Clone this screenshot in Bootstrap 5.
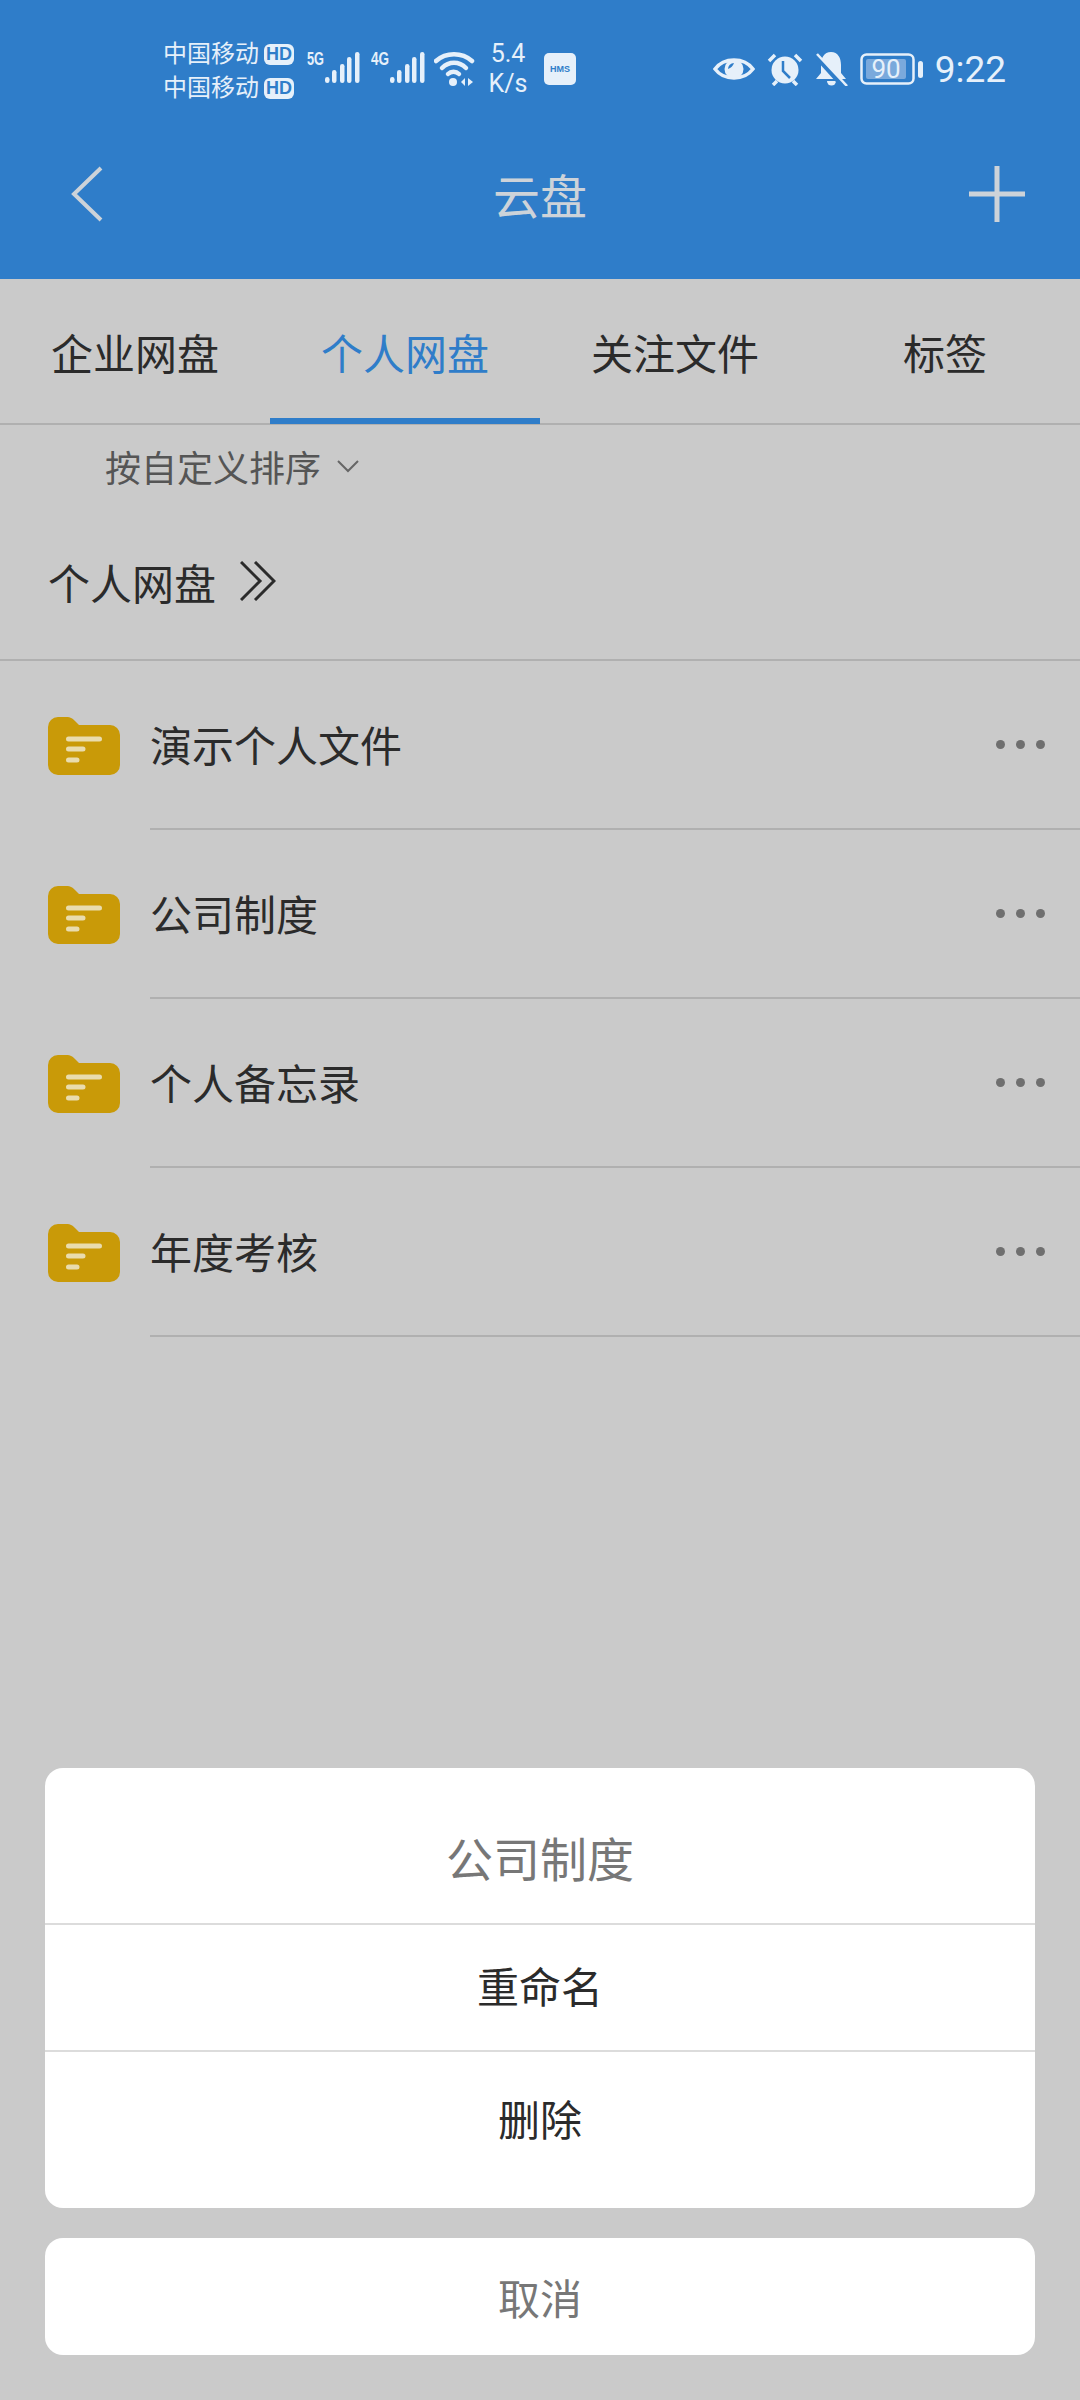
<!DOCTYPE html>
<html lang="zh">

<head>
  <meta charset="UTF-8" />
  <title>云盘</title>
  <meta name="viewport" content="width=device-width, initial-scale=1.0" />
  <link href="https://cdn.jsdelivr.net/npm/bootstrap@5.3.0/dist/css/bootstrap.min.css" rel="stylesheet" />
  <style>
    body {
      width: 1080px;
      height: 2400px;
      overflow: hidden;
      background: #cacaca;
      font-family: "Noto Sans CJK SC", "Liberation Sans", sans-serif;
      color: #2b2b2b;
    }

    .app-top {
      height: 279px;
      background: #2f7dc9;
      color: #e6f0fa;
    }

    .status-row {
      height: 138px;
      padding-left: 163px;
      padding-right: 74px;
    }

    .carrier {
      font-size: 24px;
      line-height: 34px;
      width: 131px;
      white-space: nowrap;
    }

    .hd-tag {
      display: inline-block;
      width: 30px;
      height: 21px;
      background: #e6f0fa;
      color: #2f7dc9;
      font: 700 18px/21px "Liberation Sans", sans-serif;
      border-radius: 6px;
      text-align: center;
      margin-left: 5px;
      vertical-align: 2px;
    }

    .sig-a { margin-left: 13px; }
    .sig-b { margin-left: 9px; }
    .sig-c { margin-left: 8px; }

    .speed {
      font: 25px/30px Roboto, sans-serif;
      text-align: center;
      width: 44px;
      margin-left: 10px;
    }

    .hms-tag {
      width: 32px;
      height: 32px;
      background: #e6f0fa;
      color: #2f7dc9;
      border-radius: 5px;
      font: 700 9px/32px "Liberation Sans", sans-serif;
      text-align: center;
      margin-left: 14px;
    }

    .clock {
      font: 37px/1 Roboto, sans-serif;
      margin-left: 4px;
    }

    .title-row {
      height: 141px;
      padding: 0 54px 30px 54px;
      color: #cdd3d9;
    }

    .side-box {
      width: 58px;
      flex-shrink: 0;
    }

    .title-text {
      font-size: 47px;
      line-height: 1;
    }

    .tab-strip {
      height: 146px;
      border-bottom: 2px solid #b0b0b0;
    }

    .tab-item {
      width: 270px;
      font-size: 42px;
      line-height: 1;
      padding-top: 52px;
      text-align: center;
    }

    .tab-item.on {
      color: #2f7dc9;
      border-bottom: 6px solid #2f7dc9;
      margin-bottom: -1px;
    }

    .sort-row {
      height: 84px;
      padding: 0 0 3px 105px;
      font-size: 36px;
      color: #555;
    }

    .crumb-row {
      height: 152px;
      padding: 0 0 6px 48px;
      font-size: 42px;
      border-bottom: 2px solid #b0b0b0;
    }

    .file-row {
      height: 169px;
      padding-left: 48px;
    }

    .file-body {
      height: 169px;
      margin-left: 30px;
      padding: 0 35px 2px 0;
      font-size: 42px;
      border-bottom: 2px solid #b0b0b0;
    }

    .dot-set {
      gap: 11px;
      padding-top: 2px;
    }

    .dot-set i {
      display: block;
      width: 9px;
      height: 9px;
      border-radius: 50%;
      background: #6f6f6f;
    }

    .sheet-area {
      position: absolute;
      left: 45px;
      top: 1768px;
      width: 990px;
    }

    .sheet-box {
      background: #fff;
      border-radius: 18px;
      text-align: center;
      overflow: hidden;
    }

    .sheet-head {
      height: 157px;
      font-size: 47px;
      color: #777;
      border-bottom: 2px solid #dcdcdc;
      padding-top: 24px;
    }

    .sheet-opt {
      font-size: 42px;
      color: #2b2b2b;
    }

    .opt-first {
      height: 127px;
      padding-bottom: 6px;
      border-bottom: 2px solid #dcdcdc;
    }

    .opt-last {
      height: 156px;
      padding-bottom: 26px;
    }

    .sheet-cancel {
      height: 117px;
      margin-top: 30px;
      font-size: 42px;
      color: #777;
    }
  </style>
</head>

<body>
  <div class="app-top">
    <!-- barra de estado -->
    <div class="status-row d-flex align-items-center">
      <div class="carrier">
        <div>中国移动<span class="hd-tag">HD</span></div>
        <div>中国移动<span class="hd-tag">HD</span></div>
      </div>
      <svg class="sig-a" width="55" height="44" viewBox="0 -4 55 44" fill="#e6f0fa">
        <text x="0" y="14" font-family="Liberation Sans" font-weight="700" font-size="18" textLength="17" lengthAdjust="spacingAndGlyphs">5G</text>
        <rect x="18" y="26" width="4.500" height="6" rx="2.200" /><rect x="25" y="19" width="4.500" height="13" rx="2.200" /><rect x="33" y="13" width="4.500" height="19" rx="2.200" /><rect x="40" y="6" width="4.500" height="26" rx="2.200" /><rect x="48" y="1" width="4.500" height="31" rx="2.200" />
      </svg>
      <svg class="sig-b" width="55" height="44" viewBox="0 -4 55 44" fill="#e6f0fa">
        <text x="0" y="14" font-family="Liberation Sans" font-weight="700" font-size="18" textLength="18" lengthAdjust="spacingAndGlyphs">4G</text>
        <rect x="19" y="26" width="4.500" height="6" rx="2.200" /><rect x="26" y="19" width="4.500" height="13" rx="2.200" /><rect x="34" y="13" width="4.500" height="19" rx="2.200" /><rect x="41" y="6" width="4.500" height="26" rx="2.200" /><rect x="49" y="1" width="4.500" height="31" rx="2.200" />
      </svg>
      <svg class="sig-c" width="42" height="36" viewBox="0 0 42 36" fill="none" stroke="#e6f0fa" stroke-width="4.500" stroke-linecap="round">
        <path d="M2 10C12 1 28 1 38 10" /><path d="M8 17C15 10 25 10 32 17" /><path d="M14 23C17 20 22 20 25 23" />
        <circle cx="19" cy="31" r="4" fill="#e6f0fa" stroke="none" />
        <path d="M31 27l-4 4 4 4zM34 27l5 4-5 4z" fill="#e6f0fa" stroke="none" />
      </svg>
      <div class="speed">5.4<br />K/s</div>
      <div class="hms-tag">HMS</div>
      <div class="ms-auto d-flex align-items-center gap-2">
        <svg width="42" height="30" viewBox="0 0 42 30">
          <path d="M2 15C11 3 31 3 40 15C31 27 11 27 2 15Z" fill="none" stroke="#e6f0fa" stroke-width="3.500" />
          <circle cx="21" cy="15" r="9.500" fill="#e6f0fa" />
          <path d="M21 9a6 6 0 0 0-6 6c3-1 5-3 6-6Z" fill="#2f7dc9" />
        </svg>
        <svg class="ms-1" width="36" height="34" viewBox="0 0 36 34">
          <circle cx="18" cy="18" r="13.500" fill="#e6f0fa" />
          <path d="M16 9v10l7 7" fill="none" stroke="#2f7dc9" stroke-width="2.500" />
          <path d="M2 9l6-6M34 9l-6-6M6 33l4-4M30 33l-4-4" stroke="#e6f0fa" stroke-width="3.500" />
        </svg>
        <svg class="ms-1" width="33" height="34" viewBox="0 0 33 34" fill="#e6f0fa">
          <path d="M16 0c7 0 10 6 10 13v8l5 6H1l5-6v-8C6 6 9 0 16 0Z" />
          <path d="M12 29h9a4.500 4.500 0 0 1-9 0Z" />
          <path d="M0 3l28 31" stroke="#2f7dc9" stroke-width="5" />
          <path d="M2 2l30 32" stroke="#e6f0fa" stroke-width="2.500" />
        </svg>
        <svg class="ms-1" width="63" height="32" viewBox="0 0 63 32">
          <rect x="1.500" y="1.500" width="52" height="29" rx="5" fill="none" stroke="#e6f0fa" stroke-width="2.500" />
          <rect x="6" y="6" width="40" height="20" rx="2" fill="#7aa9dc" />
          <text x="26" y="25" text-anchor="middle" font-family="Roboto" font-size="26" fill="#e6f0fa">90</text>
          <rect x="58" y="8" width="5" height="17" rx="2.500" fill="#e6f0fa" />
        </svg>
        <div class="clock">9:22</div>
      </div>
    </div>
    <!-- barra de titulo -->
    <div class="title-row d-flex align-items-center">
      <div class="side-box">
        <svg class="d-block ms-3" width="34" height="56" viewBox="0 0 34 56" fill="none" stroke="#cdd3d9" stroke-width="4">
          <path d="M31 2L4 28l27 26" />
        </svg>
      </div>
      <div class="title-text flex-grow-1 text-center">云盘</div>
      <svg class="side-box" width="58" height="58" viewBox="0 0 58 58" stroke="#cdd3d9" stroke-width="5">
        <path d="M29 1v56M1 29h56" />
      </svg>
    </div>
  </div>

  <div class="tab-strip d-flex">
    <div class="tab-item">企业网盘</div>
    <div class="tab-item on">个人网盘</div>
    <div class="tab-item">关注文件</div>
    <div class="tab-item">标签</div>
  </div>

  <div class="sort-row d-flex align-items-center">
    <span>按自定义排序</span>
    <svg class="ms-3" width="22" height="14" viewBox="0 0 22 14" fill="none" stroke="#666" stroke-width="2">
      <path d="M1 2l10 10L21 2" />
    </svg>
  </div>

  <div class="crumb-row d-flex align-items-center">
    <span>个人网盘</span>
    <svg class="ms-4" width="36" height="40" viewBox="0 0 36 40" fill="none" stroke="#2b2b2b" stroke-width="3">
      <path d="M1 1l19 19L1 39M15 1l19 19-19 19" />
    </svg>
  </div>

  <div id="fileList"></div>

  <div class="sheet-area">
    <div class="sheet-box">
      <div class="sheet-head d-flex align-items-center justify-content-center">公司制度</div>
      <div class="sheet-opt opt-first d-flex align-items-center justify-content-center">重命名</div>
      <div class="sheet-opt opt-last d-flex align-items-center justify-content-center">删除</div>
    </div>
    <div class="sheet-box sheet-cancel d-flex align-items-center justify-content-center">取消</div>
  </div>

  <script>
    const archivos = ['演示个人文件', '公司制度', '个人备忘录', '年度考核'];
    const lista = document.getElementById('fileList');

    archivos.forEach(nombre => {
      const fila = document.createElement('div');
      fila.className = 'file-row d-flex align-items-center';
      fila.innerHTML = `
        <svg class="flex-shrink-0" width="72" height="58" viewBox="0 0 72 58">
          <path d="M0 10A10 10 0 0 1 10 0H18C23 0 25 2 27 4L31 8H62A10 10 0 0 1 72 18V48A10 10 0 0 1 62 58H10A10 10 0 0 1 0 48Z" fill="#c99a08" />
          <path d="M20.500 22H51.500M20.500 32H35M20.500 43H29" stroke="#e9dcae" stroke-width="5" stroke-linecap="round" />
        </svg>
        <div class="file-body flex-grow-1 d-flex align-items-center justify-content-between">
          <span>${nombre}</span>
          <div class="dot-set d-flex"><i></i><i></i><i></i></div>
        </div>`;
      lista.appendChild(fila);
    });
  </script>
  <script src="https://cdn.jsdelivr.net/npm/bootstrap@5.3.0/dist/js/bootstrap.bundle.min.js"></script>
</body>

</html>
